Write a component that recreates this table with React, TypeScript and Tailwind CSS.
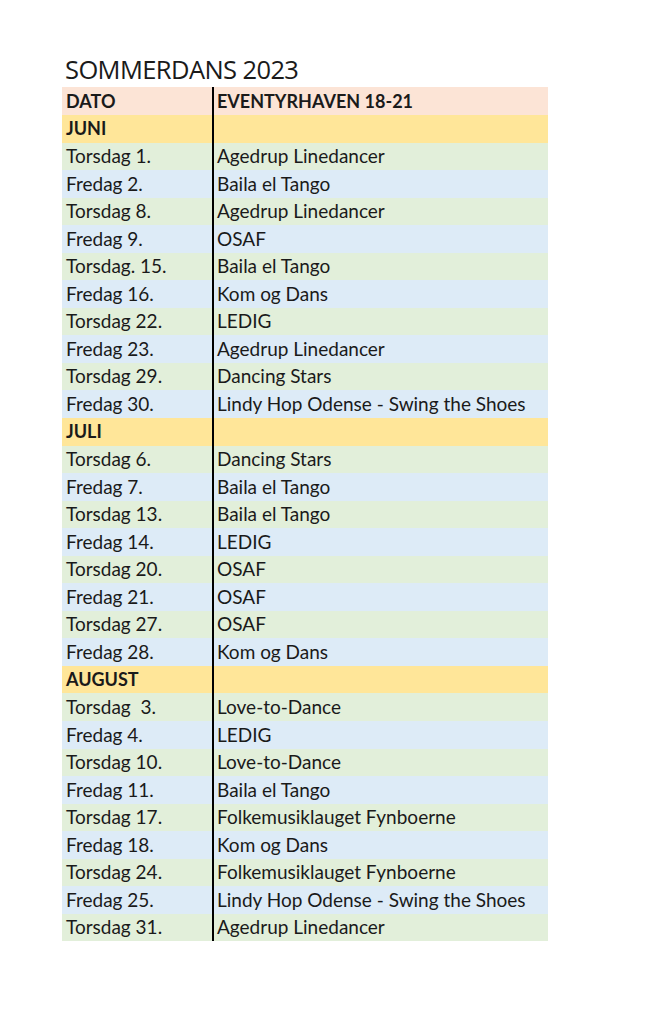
import React from "react";

type Row = { d: string; e: string; k: "m" | "g" | "b" };

const rows: Row[] = [
  { d: "JUNI", e: "", k: "m" },
  { d: "Torsdag 1.", e: "Agedrup Linedancer", k: "g" },
  { d: "Fredag 2.", e: "Baila el Tango", k: "b" },
  { d: "Torsdag 8.", e: "Agedrup Linedancer", k: "g" },
  { d: "Fredag 9.", e: "OSAF", k: "b" },
  { d: "Torsdag. 15.", e: "Baila el Tango", k: "g" },
  { d: "Fredag 16.", e: "Kom og Dans", k: "b" },
  { d: "Torsdag 22.", e: "LEDIG", k: "g" },
  { d: "Fredag 23.", e: "Agedrup Linedancer", k: "b" },
  { d: "Torsdag 29.", e: "Dancing Stars", k: "g" },
  { d: "Fredag 30.", e: "Lindy Hop Odense - Swing the Shoes", k: "b" },
  { d: "JULI", e: "", k: "m" },
  { d: "Torsdag 6.", e: "Dancing Stars", k: "g" },
  { d: "Fredag 7.", e: "Baila el Tango", k: "b" },
  { d: "Torsdag 13.", e: "Baila el Tango", k: "g" },
  { d: "Fredag 14.", e: "LEDIG", k: "b" },
  { d: "Torsdag 20.", e: "OSAF", k: "g" },
  { d: "Fredag 21.", e: "OSAF", k: "b" },
  { d: "Torsdag 27.", e: "OSAF", k: "g" },
  { d: "Fredag 28.", e: "Kom og Dans", k: "b" },
  { d: "AUGUST", e: "", k: "m" },
  { d: "Torsdag  3.", e: "Love-to-Dance", k: "g" },
  { d: "Fredag 4.", e: "LEDIG", k: "b" },
  { d: "Torsdag 10.", e: "Love-to-Dance", k: "g" },
  { d: "Fredag 11.", e: "Baila el Tango", k: "b" },
  { d: "Torsdag 17.", e: "Folkemusiklauget Fynboerne", k: "g" },
  { d: "Fredag 18.", e: "Kom og Dans", k: "b" },
  { d: "Torsdag 24.", e: "Folkemusiklauget Fynboerne", k: "g" },
  { d: "Fredag 25.", e: "Lindy Hop Odense - Swing the Shoes", k: "b" },
  { d: "Torsdag 31.", e: "Agedrup Linedancer", k: "g" },
];

const bg = { m: "bg-[#ffe699]", g: "bg-[#e2efda]", b: "bg-[#ddebf7]" };

export default function App() {
  return (
    <div className="w-[654px] h-[1030px] bg-white pt-[52px] pl-[62px] text-[#1a1a1a]" style={{ fontFamily: "Lato, 'Open Sans', sans-serif" }}>
      <div className="pl-[3px] text-[25.5px] leading-[35px] tracking-[-0.6px]" style={{ fontFamily: "'Open Sans', sans-serif" }}>SOMMERDANS 2023</div>
      <div className="w-[486px] text-[19px]">
        <div className="flex h-[28px] bg-[#fce4d6] font-bold text-[18px]">
          <div className="w-[152px] pl-[4px] border-r-2 border-black h-full flex items-center">DATO</div>
          <div className="pl-[3px] flex items-center">EVENTYRHAVEN 18-21</div>
        </div>
        {rows.map((r, i) => (
          <div key={i} className={`flex h-[27.55px] ${bg[r.k]} ${r.k === "m" ? "font-bold text-[18px]" : ""}`}>
            <div className="w-[152px] pl-[4px] border-r-2 border-black h-full flex items-center whitespace-pre">{r.d}</div>
            <div className="pl-[3px] flex items-center whitespace-pre">{r.e}</div>
          </div>
        ))}
      </div>
    </div>
  );
}
